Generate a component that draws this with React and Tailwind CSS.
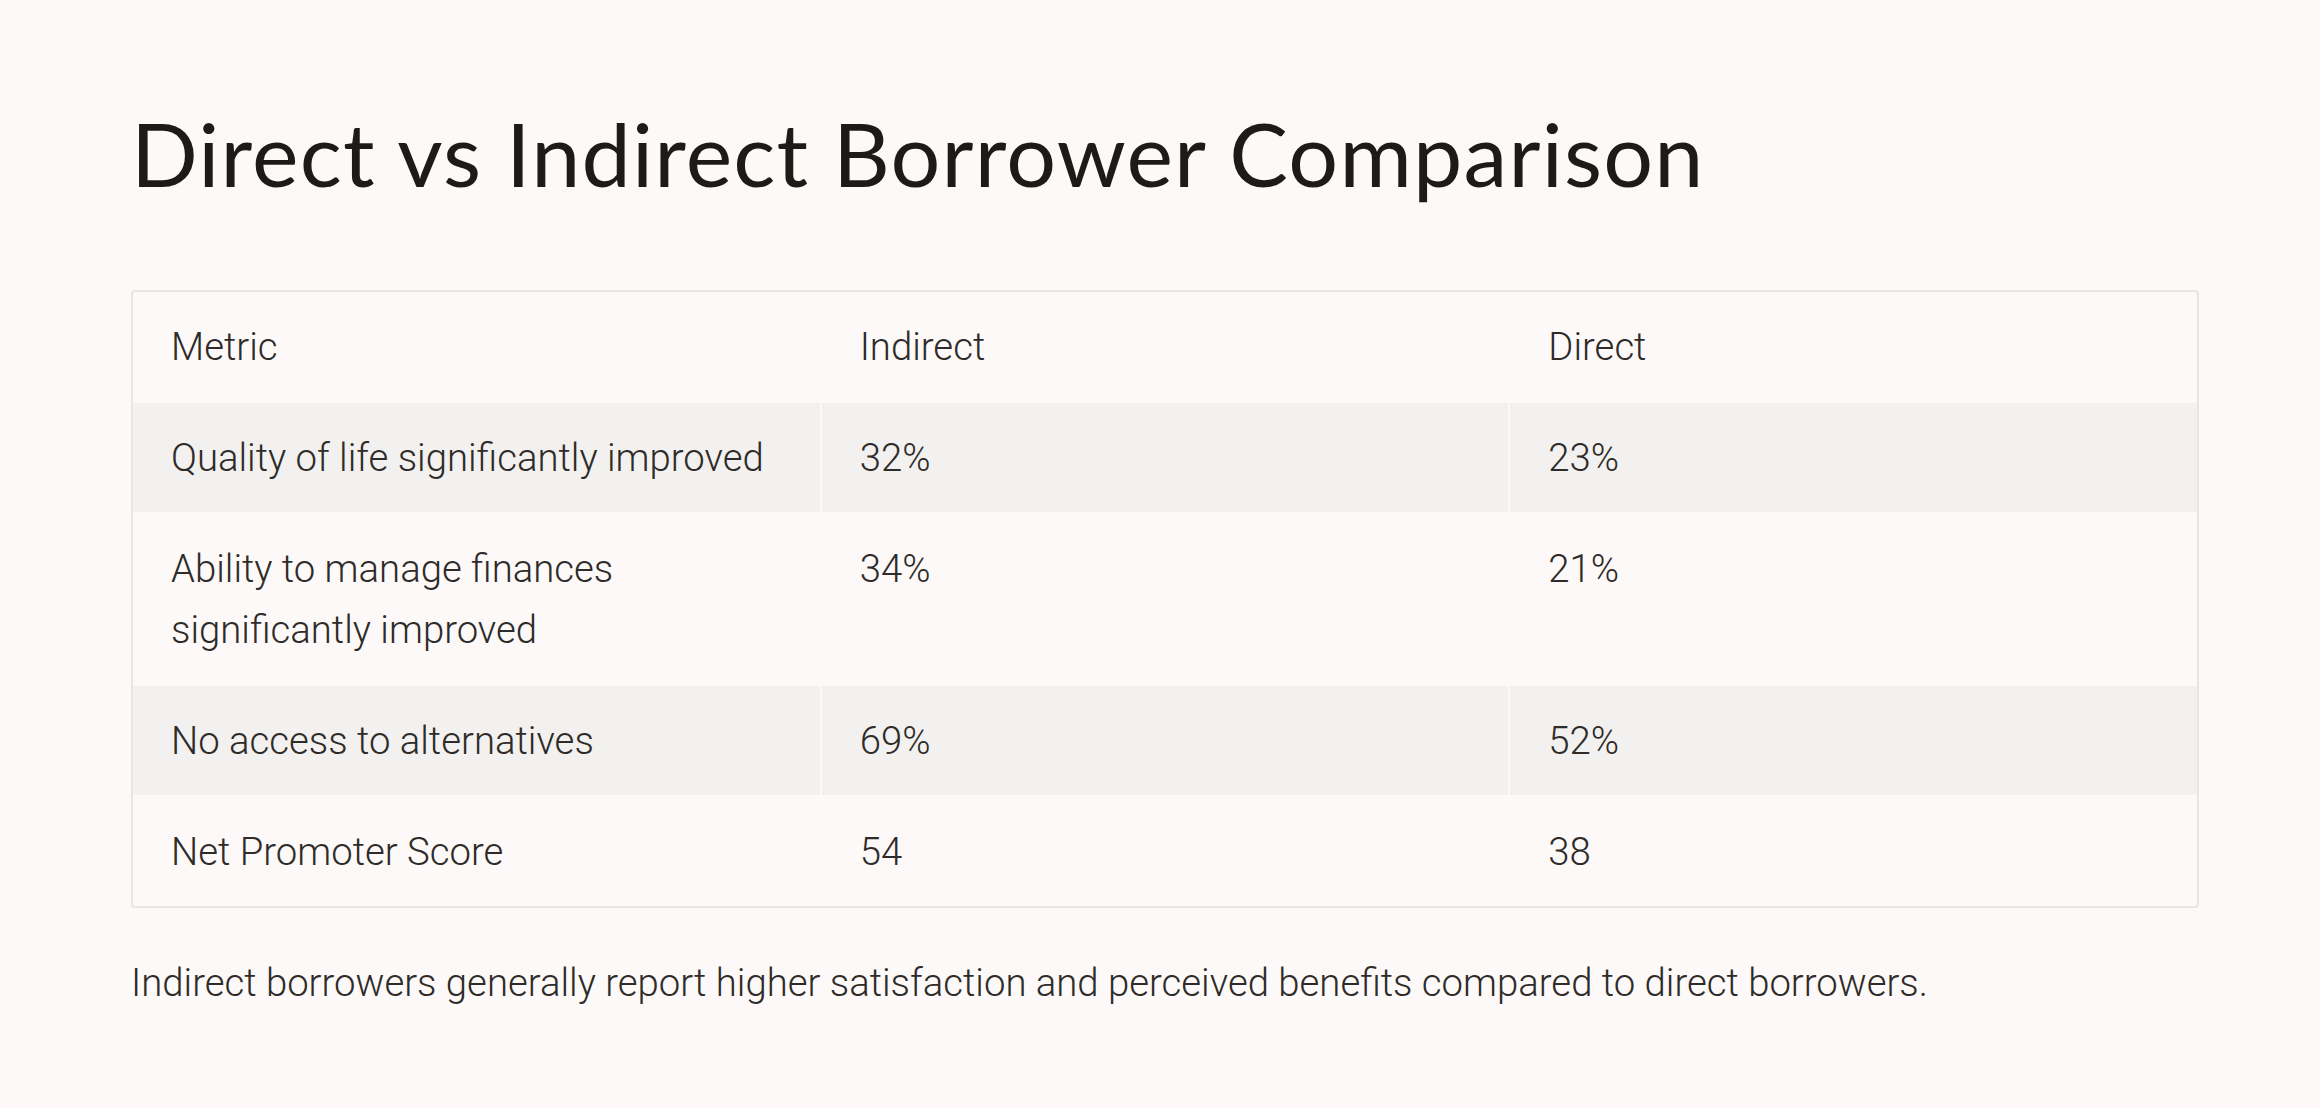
export default function App() {
  const rows = [
    ["Quality of life significantly improved", "32%", "23%"],
    ["Ability to manage finances significantly improved", "34%", "21%"],
    ["No access to alternatives", "69%", "52%"],
    ["Net Promoter Score", "54", "38"],
  ];
  const cell = "pl-[38px] pr-[40px] py-6 text-[38.3px] leading-[61px] font-light text-[#2e2b29]";
  return (
    <div className="min-h-[1108px] w-full bg-[#fcf9f8] pl-[131px] pr-[121px] pt-[101px]" style={{ fontFamily: "Roboto, 'Liberation Sans', sans-serif" }}>
      <h1 className="text-[88px] leading-[1.2] font-normal tracking-[1.2px] text-[#1c1b1a]" style={{ fontFamily: "Lato, 'Noto Sans', sans-serif" }}>
        Direct vs Indirect Borrower Comparison
      </h1>
      <div className="mt-[83px] border-2 border-[#e9e5e3] rounded-[4px] flex flex-col gap-[2px]">
        <div className="grid grid-cols-3 gap-[2px]">
          <div className={cell}>Metric</div>
          <div className={cell}>Indirect</div>
          <div className={cell}>Direct</div>
        </div>
        {rows.map((r, i) => (
          <div key={i} className="grid grid-cols-3 gap-[2px]">
            {r.map((c, j) => (
              <div key={j} className={`${cell} ${i % 2 === 0 ? "bg-[#f2f1ef]" : ""}`}>
                {c}
              </div>
            ))}
          </div>
        ))}
      </div>
      <p className="mt-[44px] text-[38.3px] leading-[61px] font-light text-[#2e2b29]">
        Indirect borrowers generally report higher satisfaction and perceived benefits compared to direct borrowers.
      </p>
    </div>
  );
}
